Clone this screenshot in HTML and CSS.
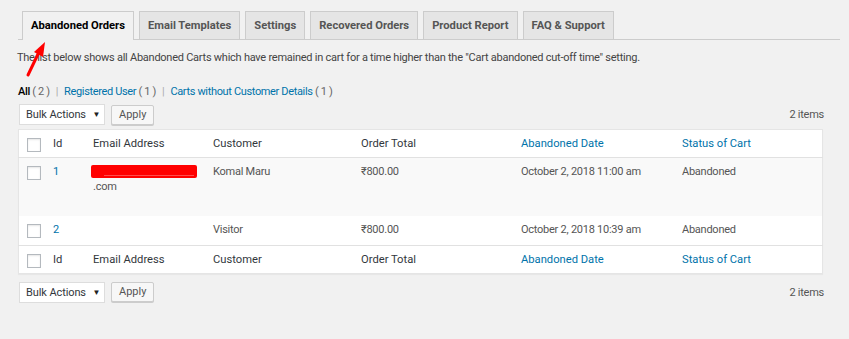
FILE: index.html
```html
<!DOCTYPE html>
<html lang="en">
<head>
    <meta charset="UTF-8">
    <title>Abandoned Orders</title>
    <link rel="stylesheet" href="styles.css">
</head>
<body>
    <div class="wrap">
        <div class="nav-tab-wrapper">
            <a class="nav-tab nav-tab-active">Abandoned Orders</a>
            <a class="nav-tab">Email Templates</a>
            <a class="nav-tab">Settings</a>
            <a class="nav-tab">Recovered Orders</a>
            <a class="nav-tab">Product Report</a>
            <a class="nav-tab">FAQ &amp; Support</a>
        </div>

        <p class="description">The list below shows all Abandoned Carts which have remained in cart for a time higher than the "Cart abandoned cut-off time" setting.</p>

        <ul class="subsubsub">
            <li><b>All</b> <span class="count">( 2 )</span></li>
            <li class="sep">|</li>
            <li><a>Registered User</a> <span class="count">( 1 )</span></li>
            <li class="sep">|</li>
            <li><a>Carts without Customer Details</a> <span class="count">( 1 )</span></li>
        </ul>

        <div class="tablenav">
            <div class="bulk">
                <span class="select">Bulk Actions <span class="caret">&#9660;</span></span>
                <span class="button">Apply</span>
            </div>
            <span class="items">2 items</span>
        </div>

        <table class="list-table">
            <thead>
                <tr>
                    <th class="cb"><span class="checkbox"></span></th>
                    <th class="col-id">Id</th>
                    <th class="col-email">Email Address</th>
                    <th class="col-customer">Customer</th>
                    <th class="col-total">Order Total</th>
                    <th class="col-date sortable">Abandoned Date</th>
                    <th class="col-status sortable">Status of Cart</th>
                </tr>
            </thead>
            <tbody>
                <tr class="alt tall">
                    <td class="cb"><span class="checkbox"></span></td>
                    <td><a>1</a></td>
                    <td><span class="redacted"></span><br>.com</td>
                    <td>Komal Maru</td>
                    <td>&#8377;800.00</td>
                    <td>October 2, 2018 11:00 am</td>
                    <td>Abandoned</td>
                </tr>
                <tr>
                    <td class="cb"><span class="checkbox"></span></td>
                    <td><a>2</a></td>
                    <td></td>
                    <td>Visitor</td>
                    <td>&#8377;800.00</td>
                    <td>October 2, 2018 10:39 am</td>
                    <td>Abandoned</td>
                </tr>
            </tbody>
            <tfoot>
                <tr>
                    <th class="cb"><span class="checkbox"></span></th>
                    <th>Id</th>
                    <th>Email Address</th>
                    <th>Customer</th>
                    <th>Order Total</th>
                    <th class="sortable">Abandoned Date</th>
                    <th class="sortable">Status of Cart</th>
                </tr>
            </tfoot>
        </table>

        <div class="tablenav bottom">
            <div class="bulk">
                <span class="select">Bulk Actions <span class="caret">&#9660;</span></span>
                <span class="button">Apply</span>
            </div>
            <span class="items">2 items</span>
        </div>

        <!-- red arrow drawn over the screenshot -->
        <svg class="arrow" width="40" height="45" viewBox="0 0 40 45">
            <line x1="8" y1="37" x2="19" y2="14" stroke="#f00" stroke-width="3" stroke-linecap="round"/>
            <polygon points="25,4 14,14 23,19" fill="#f00"/>
        </svg>
    </div>
</body>
</html>
```

FILE: styles.css
```css
body {
    margin: 0;
    background: #f1f1f1;
    font-family: Roboto, "Liberation Sans", sans-serif;
    font-size: 11px;
    letter-spacing: -0.25px;
    color: #444;
}
a {
    color: #0073aa;
    text-decoration: none;
}
.wrap {
    position: relative;
    padding: 11px 26px 0 18px;
}
.nav-tab-wrapper {
    display: flex;
    gap: 5px;
    padding-left: 4px;
    border-bottom: 1px solid #ccc;
    margin-right: -17px;
}
.nav-tab {
    display: block;
    padding: 0 8px;
    height: 27px;
    line-height: 27px;
    margin-bottom: -1px;
    border: 1px solid #ccc;
    border-bottom: none;
    background: #e5e5e5;
    color: #555;
    font-weight: bold;
    font-size: 11.2px;
    letter-spacing: 0;
}
.nav-tab-active {
    background: #f1f1f1;
    color: #000;
    height: 28px;
}
.description {
    margin: 10px 0 0 -1px;
    line-height: 15px;
    color: #444;
}
.subsubsub {
    list-style: none;
    margin: 19px 0 0;
    padding: 0;
    display: flex;
    gap: 6px;
    line-height: 15px;
    letter-spacing: -0.35px;
    color: #666;
}
.subsubsub b {
    color: #000;
    font-weight: 500;
}
.subsubsub .sep {
    color: #aaa;
}
.tablenav {
    display: flex;
    justify-content: space-between;
    align-items: center;
    margin-top: 5px;
    height: 21px;
}
.tablenav.bottom {
    margin-top: 8px;
}
.bulk {
    display: flex;
    gap: 6px;
    align-items: center;
    padding-left: 1px;
}
.select {
    display: inline-block;
    box-sizing: border-box;
    width: 86px;
    height: 21px;
    line-height: 19px;
    padding-left: 6px;
    background: #fff;
    border: 1px solid #ddd;
    color: #32373c;
    white-space: nowrap;
    letter-spacing: -0.1px;
}
.caret {
    font-size: 8px;
    margin-left: 4px;
    vertical-align: 1px;
    color: #222;
}
.button {
    display: inline-block;
    box-sizing: border-box;
    height: 20px;
    line-height: 17px;
    padding: 0 7px;
    background: #f7f7f7;
    border: 1px solid #ccc;
    border-radius: 2px;
    box-shadow: 0 1px 0 #ccc;
    color: #555;
    letter-spacing: 0;
}
.items {
    color: #555;
    margin-right: -1px;
}
.list-table {
    width: 100%;
    margin-top: 4px;
    border-collapse: collapse;
    background: #fff;
    border: 1px solid #e5e5e5;
    box-shadow: 0 1px 1px rgba(0, 0, 0, .04);
    table-layout: fixed;
}
.list-table th, .list-table td {
    text-align: left;
    vertical-align: top;
    padding: 6px 8px 8px;
    line-height: 15px;
    font-weight: normal;
}
.list-table th {
    color: #32373c;
    padding: 6px 8px 6px;
    font-size: 11.2px;
    letter-spacing: 0;
}
.list-table td {
    color: #555;
}
.list-table thead tr {
    border-bottom: 1px solid #e1e1e1;
}
.list-table tfoot tr {
    border-top: 1px solid #e1e1e1;
}
.list-table .sortable {
    color: #0073aa;
}
.list-table .cb {
    width: 18px;
    padding: 8px 0 0 8px;
}
.col-id { width: 24px; }
.col-email { width: 104px; }
.col-customer { width: 132px; }
.col-total { width: 144px; }
.col-date { width: 145px; }
.checkbox {
    display: block;
    width: 12px;
    height: 12px;
    border: 1px solid #b4b9be;
    background: #fff;
    box-shadow: inset 0 1px 2px rgba(0, 0, 0, .1);
}
.alt {
    background: #f9f9f9;
}
.tall {
    height: 58px;
}
.redacted {
    display: inline-block;
    position: relative;
    width: 106px;
    height: 13px;
    margin: 1px 0 0 -2px;
    background: #f00;
    border-radius: 2px;
    vertical-align: top;
}
.redacted::after {
    content: "";
    position: absolute;
    left: 13px;
    right: 3px;
    bottom: 2px;
    border-bottom: 1px solid rgba(255, 255, 255, .3);
}
.arrow {
    position: absolute;
    left: 20px;
    top: 38px;
}
```
